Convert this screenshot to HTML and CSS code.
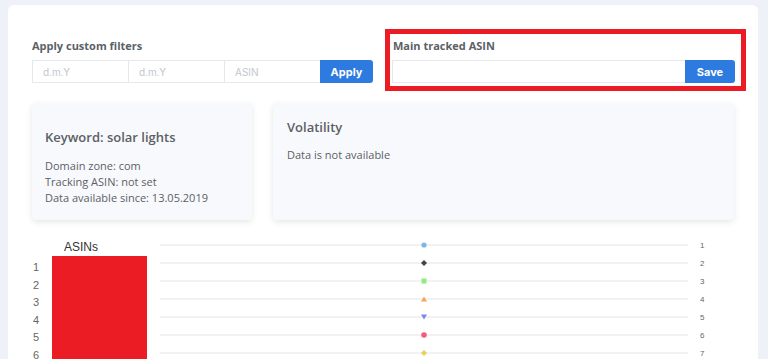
FILE: index.html
```html
<!DOCTYPE html>
<html lang="en">
<head>
    <meta charset="UTF-8">
    <meta name="viewport" content="width=device-width, initial-scale=1.0">
    <title>Keyword tracker</title>
    <link rel="stylesheet" href="styles.css">
</head>
<body>
    <div class="page">
        <div class="panel">
            <div class="top-row">
                <!-- Custom filters -->
                <div class="filters">
                    <label class="field-label">Apply custom filters</label>
                    <div class="input-group">
                        <input type="text" placeholder="d.m.Y">
                        <input type="text" placeholder="d.m.Y">
                        <input type="text" placeholder="ASIN">
                        <button>Apply</button>
                    </div>
                </div>

                <!-- Main tracked ASIN -->
                <div class="tracked">
                    <label class="field-label">Main tracked ASIN</label>
                    <div class="input-group">
                        <input type="text" class="wide">
                        <button>Save</button>
                    </div>
                </div>
            </div>

            <div class="info-row">
                <div class="info-card keyword">
                    <h3>Keyword: solar lights</h3>
                    <p>Domain zone: com</p>
                    <p>Tracking ASIN: not set</p>
                    <p>Data available since: 13.05.2019</p>
                </div>
                <div class="info-card volatility">
                    <h3>Volatility</h3>
                    <p>Data is not available</p>
                </div>
            </div>

            <div class="chart">
                <svg width="714" height="124" viewBox="0 0 714 124">
                    <g class="grid">
                        <line x1="128" y1="10" x2="656" y2="10"/>
                        <line x1="128" y1="28" x2="656" y2="28"/>
                        <line x1="128" y1="46" x2="656" y2="46"/>
                        <line x1="128" y1="64" x2="656" y2="64"/>
                        <line x1="128" y1="82" x2="656" y2="82"/>
                        <line x1="128" y1="100" x2="656" y2="100"/>
                        <line x1="128" y1="118" x2="656" y2="118"/>
                    </g>
                    <text class="chart-title" x="32" y="16">ASINs</text>
                    <rect x="20" y="21" width="95" height="110" fill="#ec1c24"/>
                    <g class="axis-left">
                        <text x="1" y="36">1</text>
                        <text x="1" y="54">2</text>
                        <text x="1" y="71">3</text>
                        <text x="1" y="89">4</text>
                        <text x="1" y="106">5</text>
                        <text x="1" y="124">6</text>
                    </g>
                    <g class="markers">
                        <circle cx="392" cy="10" r="2.6" fill="#7cb5ec"/>
                        <path d="M392 25 L395 28 L392 31 L389 28 Z" fill="#434348"/>
                        <rect x="389.5" y="43.5" width="5" height="5" fill="#90ed7d"/>
                        <path d="M392 61.5 L395 66.5 L389 66.5 Z" fill="#f7a35c"/>
                        <path d="M389 79.5 L395 79.5 L392 84.5 Z" fill="#8085e9"/>
                        <circle cx="392" cy="100" r="2.8" fill="#f15c80"/>
                        <path d="M392 115 L395 118 L392 121 L389 118 Z" fill="#e4d354"/>
                    </g>
                    <g class="axis-right">
                        <text x="668" y="13">1</text>
                        <text x="668" y="31">2</text>
                        <text x="668" y="49">3</text>
                        <text x="668" y="67">4</text>
                        <text x="668" y="85">5</text>
                        <text x="668" y="103">6</text>
                        <text x="668" y="121">7</text>
                    </g>
                </svg>
            </div>
        </div>
    </div>
</body>
</html>
```

FILE: styles.css
```css
body {
    font-family: "Open Sans", sans-serif;
    background-color: #eef1f7;
    margin: 0;
    padding: 0;
    color: #5b5f66;
}
.page {
    padding: 5px 10px 0 8px;
}
.panel {
    background-color: #fff;
    border-radius: 6px 6px 0 0;
    padding: 24px 12px 0 24px;
    height: 354px;
    box-sizing: border-box;
    overflow: hidden;
}
.top-row {
    display: flex;
    align-items: flex-start;
    gap: 12px;
}
.filters {
    width: 341px;
    margin-top: 9px;
}
.field-label {
    display: block;
    font-size: 11px;
    font-weight: 700;
    line-height: 16px;
    color: #5b5f66;
    margin-bottom: 6px;
}
.input-group {
    display: flex;
    height: 23px;
}
.input-group input {
    width: 96px;
    box-sizing: border-box;
    border: 1px solid #e6e8ee;
    border-right: none;
    padding: 0 10px;
    font-family: Inter, sans-serif;
    font-size: 10px;
    color: #555;
    outline: none;
}
.input-group input::placeholder {
    color: #c3c6cd;
}
.input-group input.wide {
    flex: 1;
}
.input-group button {
    background-color: #2d7be0;
    color: #fff;
    border: none;
    border-radius: 0 3px 3px 0;
    font-family: Inter, sans-serif;
    font-weight: 700;
    font-size: 11px;
    padding: 0;
    cursor: pointer;
}
.filters button {
    width: 54px;
}
.tracked {
    width: 361px;
    box-sizing: border-box;
    border: 5px solid #ec1c24;
    padding: 4px 6px 3px 2px;
}
.tracked .field-label {
    padding-left: 1px;
}
.tracked button {
    width: 50px;
}
.info-row {
    display: flex;
    gap: 21px;
    margin-top: 12px;
}
.info-card {
    background-color: #f8f9fc;
    border-radius: 4px;
    box-shadow: 0 2px 6px rgba(0, 0, 0, 0.1);
    height: 117px;
    box-sizing: border-box;
}
.info-card h3 {
    margin: 0;
    font-size: 13px;
    font-weight: 600;
    line-height: 18px;
}
.info-card p {
    margin: 0;
    font-size: 11px;
    line-height: 16px;
}
.keyword {
    width: 220px;
    padding: 25px 13px 0;
}
.keyword h3 {
    margin-bottom: 12px;
}
.volatility {
    width: 461px;
    padding: 15px 14px 0;
}
.volatility h3 {
    margin-bottom: 11px;
}
.chart {
    margin-top: 15px;
}
.chart svg {
    display: block;
}
.grid line {
    stroke: #e6e6e6;
    stroke-width: 1.2;
}
.chart-title {
    font-family: "Liberation Sans", Arial, sans-serif;
    font-size: 12px;
    fill: #333;
}
.axis-left text {
    font-family: "Liberation Sans", Arial, sans-serif;
    font-size: 11px;
    fill: #666;
}
.axis-right text {
    font-family: "Liberation Sans", Arial, sans-serif;
    font-size: 8px;
    fill: #666;
}
```
